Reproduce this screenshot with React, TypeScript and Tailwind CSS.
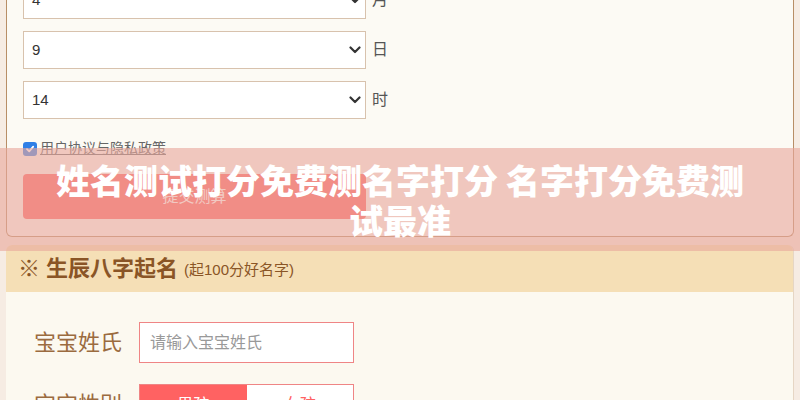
import React from "react";

const FONT = "font-['Liberation_Sans','Noto_Sans_CJK_SC',sans-serif]";

function Chevron() {
  return (
    <svg width="12" height="8" viewBox="0 0 12 8" className="shrink-0">
      <path d="M1.5 1.5 L6 6 L10.5 1.5" fill="none" stroke="#333" strokeWidth="2.2" strokeLinecap="round" strokeLinejoin="round" />
    </svg>
  );
}

function SelectRow({ value, unit }: { value: string; unit: string }) {
  return (
    <div className="flex items-center gap-[6px]">
      <div className="flex h-[38px] w-[343px] items-center justify-between border border-[#d8c2ad] bg-white pl-[8px] pr-[4px] text-[15px] text-[#333]">
        <span>{value}</span>
        <Chevron />
      </div>
      <span className="text-[16px] text-[#555]">{unit}</span>
    </div>
  );
}

export default function App() {
  return (
    <div className={`relative h-[400px] w-[800px] overflow-hidden bg-[#f6ece3] ${FONT}`}>
      <div className="px-[6px]">
        {/* Birth time form card */}
        <div className="rounded-b-[6px] border border-t-0 border-[#b88e66] bg-[#fcfaf4] px-[16px] pb-[17px]">
          <div className="-mt-[19px] flex flex-col gap-[12px]">
            <SelectRow value="4" unit="月" />
            <SelectRow value="9" unit="日" />
            <SelectRow value="14" unit="时" />
          </div>
          <div className="mt-[19px] flex items-center gap-[3px] text-[14px] text-[#666]">
            <span className="flex h-[14px] w-[14px] items-center justify-center rounded-[3px] bg-[#2f7fe6]">
              <svg width="10" height="10" viewBox="0 0 10 10">
                <path d="M2 5.2 L4.2 7.3 L8.2 2.6" fill="none" stroke="white" strokeWidth="1.8" strokeLinecap="round" strokeLinejoin="round" />
              </svg>
            </span>
            <span className="underline">用户协议与隐私政策</span>
          </div>
          <button className="mt-[15px] flex h-[45px] w-[343px] items-center justify-center rounded-[4px] bg-[#ff6262] text-[16px] text-white">
            提交测算
          </button>
        </div>

        {/* Name generation card */}
        <div className="mt-[8px] overflow-hidden rounded-t-[6px] border-r border-[#e6d6c4] bg-[#fcf9f0]">
          <div className="flex h-[47px] items-center gap-[6px] bg-[#f5dfb6] pl-[12px] text-[#8a5526]">
            <span className="text-[22px]">※</span>
            <span className="text-[22px] font-bold">生辰八字起名</span>
            <span className="mt-[3px] text-[15px]">(起100分好名字)</span>
          </div>
          <div className="flex flex-col gap-[21px] pl-[28px] pt-[30px]">
            <div className="flex items-center gap-[17px]">
              <span className="w-[88px] text-[22px] text-[#9b6b3f]">宝宝姓氏</span>
              <div className="flex h-[41px] w-[215px] items-center border border-[#ef8585] bg-white px-[10px] text-[16px] text-[#999]">
                请输入宝宝姓氏
              </div>
            </div>
            <div className="flex items-center gap-[17px]">
              <span className="w-[88px] text-[22px] text-[#9b6b3f]">宝宝性别</span>
              <div className="flex h-[41px] w-[215px] border border-[#ef8585] text-[16px]">
                <div className="flex w-1/2 items-center justify-center bg-[#ff6262] text-white">男孩</div>
                <div className="flex w-1/2 items-center justify-center bg-white text-[#ff6262]">女孩</div>
              </div>
            </div>
          </div>
        </div>
      </div>

      {/* Title overlay */}
      <div className="absolute left-0 right-0 top-[148px] flex h-[103px] items-center justify-center bg-[rgba(232,168,156,0.62)] px-[40px]">
        <h1 className="max-w-[700px] text-center font-['Noto_Sans_CJK_SC',sans-serif] text-[34px] font-black leading-[40px] text-white">
          姓名测试打分免费测名字打分 名字打分免费测试最准
        </h1>
      </div>
    </div>
  );
}
